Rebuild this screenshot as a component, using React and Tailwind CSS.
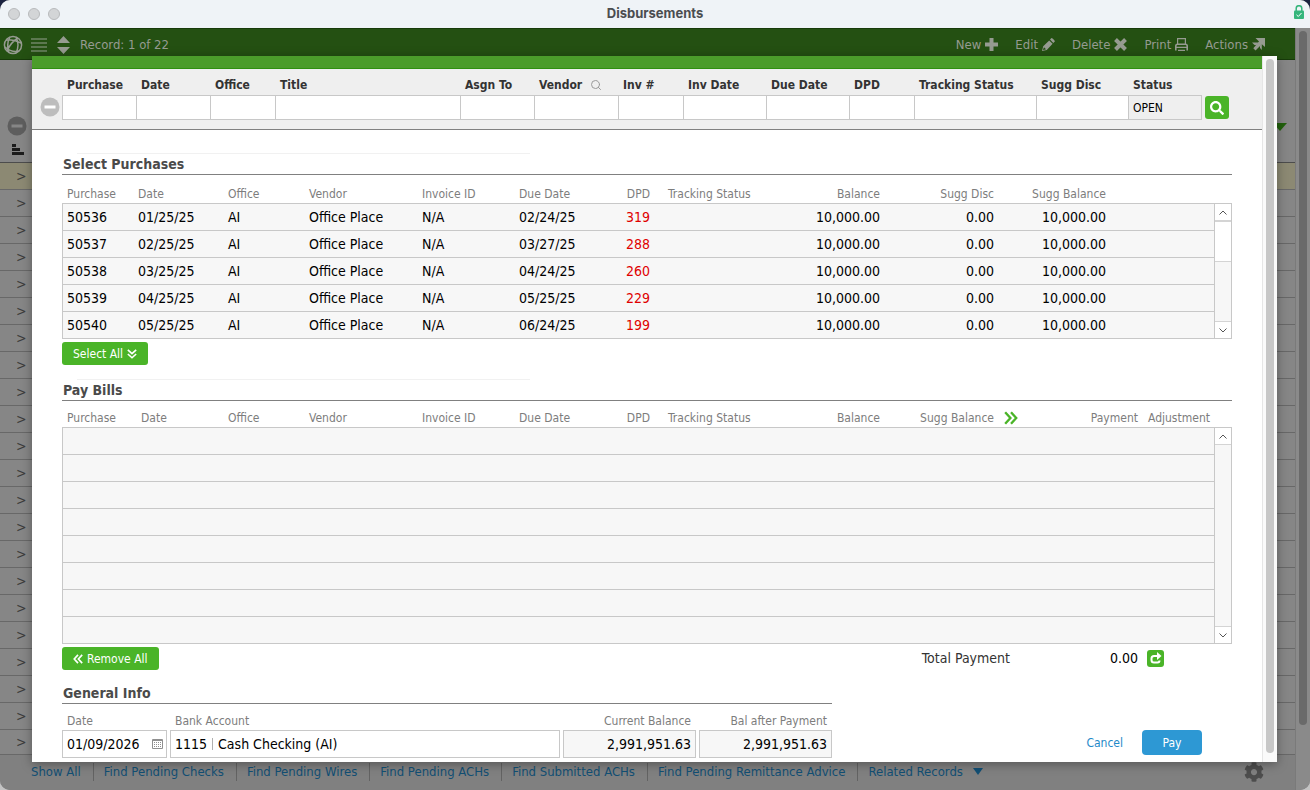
import { useState } from "react";
import { FaSearch, FaCog } from "react-icons/fa";
import { Search } from "lucide-react";

const filters = [
    { name: "Purchase", size: "flex-[74]" },
    { name: "Date", size: "flex-[74]" },
    { name: "Office", size: "flex-[65]" },
    { name: "Title", size: "flex-[185]" },
    { name: "Asgn To", size: "flex-[74]" },
    { name: "Vendor", size: "flex-[84]", lookup: true },
    { name: "Inv #", size: "flex-[65]" },
    { name: "Inv Date", size: "flex-[83]" },
    { name: "Due Date", size: "flex-[83]" },
    { name: "DPD", size: "flex-[65]" },
    { name: "Tracking Status", size: "flex-[122]" },
    { name: "Sugg Disc", size: "flex-[92]" },
    { name: "Status", size: "flex-[74]", value: "OPEN" },
];

const purchases = [
    { id: "50536", date: "01/25/25", due: "02/24/25", dpd: 319 },
    { id: "50537", date: "02/25/25", due: "03/27/25", dpd: 288 },
    { id: "50538", date: "03/25/25", due: "04/24/25", dpd: 260 },
    { id: "50539", date: "04/25/25", due: "05/25/25", dpd: 229 },
    { id: "50540", date: "05/25/25", due: "06/24/25", dpd: 199 },
];

const purchaseColumns = [
    { label: "Purchase", cls: "w-[71px] text-left pl-1" },
    { label: "Date", cls: "w-[90px] text-left pl-[5px]" },
    { label: "Office", cls: "w-[81px] text-left pl-[5px]" },
    { label: "Vendor", cls: "w-[113px] text-left pl-[5px]" },
    { label: "Invoice ID", cls: "w-[97px] text-left pl-[5px]" },
    { label: "Due Date", cls: "w-[95px] text-left pl-[5px]" },
    { label: "DPD", cls: "w-[46px] text-right pr-[5px]" },
    { label: "Tracking Status", cls: "w-[140px] text-left pl-[13px]" },
    { label: "Balance", cls: "w-[90px] text-right pr-[5px]" },
    { label: "Sugg Disc", cls: "w-[114px] text-right pr-[5px]" },
    { label: "Sugg Balance", cls: "w-[112px] text-right pr-[5px]" },
    { label: "", cls: "" },
];

const billColumns = [
    { label: "Purchase", cls: "w-[74px] text-left pl-1" },
    { label: "Date", cls: "w-[87px] text-left pl-[5px]" },
    { label: "Office", cls: "w-[81px] text-left pl-[5px]" },
    { label: "Vendor", cls: "w-[113px] text-left pl-[5px]" },
    { label: "Invoice ID", cls: "w-[97px] text-left pl-[5px]" },
    { label: "Due Date", cls: "w-[95px] text-left pl-[5px]" },
    { label: "DPD", cls: "w-[46px] text-right pr-[5px]" },
    { label: "Tracking Status", cls: "w-[140px] text-left pl-[13px]" },
    { label: "Balance", cls: "w-[90px] text-right pr-[5px]" },
    { label: "Sugg Balance", cls: "w-[114px] text-right pr-[5px]" },
    { label: "move", cls: "w-[24px] text-left pl-[5px]" },
    { label: "Payment", cls: "text-right pr-[5px]" },
    { label: "Adjustment", cls: "w-[72px] text-left pl-[5px]" },
];

const footerLinks = [
    "Show All",
    "Find Pending Checks",
    "Find Pending Wires",
    "Find Pending ACHs",
    "Find Submitted ACHs",
    "Find Pending Remittance Advice",
];

function DoubleChevron({ className }) {
    return (
        <svg viewBox="0 0 12 12" className={className} fill="none" stroke="currentColor" strokeWidth="2">
            <path d="M1 1l4.5 5L1 11M6 1l4.5 5L6 11" />
        </svg>
    );
}

function PlusIcon() {
    return (
        <svg viewBox="0 0 13 13" className="size-[13px]" fill="currentColor">
            <path d="M4.5 0h4v4.5H13v4H8.500V13h-4V8.500H0v-4h4.500z" />
        </svg>
    );
}

function PencilIcon() {
    return (
        <svg viewBox="0 0 13 13" className="size-[13px]" fill="currentColor">
            <path d="M9.500 0Q10.500 0 13 3.300L11.300 5 8 1.600zM7.200 2.400l3.400 3.400L4.800 12 0 13l1.200-4.800z" />
            <path d="M2 9.200l2 2-2.400.9-.6-.6z" fill="#245012" />
        </svg>
    );
}

function CrossIcon() {
    return (
        <svg viewBox="0 0 13 13" className="size-[13px]" stroke="currentColor" strokeWidth="4">
            <path d="M1.500 1.500l10 10M11.500 1.500l-10 10" />
        </svg>
    );
}

function PrintIcon() {
    return (
        <svg viewBox="0 0 13 13" className="size-[13px]" fill="none" stroke="currentColor">
            <path d="M2.600 6V.700h7.800V6" strokeWidth="1.200" />
            <path d="M.800 12.500V8Q.800 6.300 2.500 6.300h8q1.700 0 1.700 1.700v4.500" strokeWidth="1.600" />
            <path d="M1 9.300h11M3 12.300h7" strokeWidth="1.300" />
        </svg>
    );
}

function ActionsIcon() {
    return (
        <svg viewBox="0 0 13 13" className="size-[13px]" fill="currentColor">
            <path d="M3.500 0H13v9L9.800 6.200 3.500 12.500 1.300 10.300 7 3.500z" />
            <path d="M0 4.500h7L4.500 7H2.500zM8 7.500l1.800-1.800V12L8 10z" />
        </svg>
    );
}

function MinusCircle({ className }) {
    return (
        <svg viewBox="0 0 20 20" className={className}>
            <circle cx="10" cy="10" r="9.5" fill="currentColor" />
            <rect x="4.5" y="8.5" width="11" height="3" className="fill-[#fff]" />
        </svg>
    );
}

function GridScrollbar({ thumb }) {
    return (
        <div className="flex w-[17px] shrink-0 flex-col border border-l-0 border-[#c8c8c8] bg-[#f7f7f7]">
            <button aria-label="Scroll up" className="flex h-[17px] items-center justify-center border-b border-[#d4d4d4] bg-white text-[#555]">
                <svg viewBox="0 0 8 5" className="w-2" fill="none" stroke="currentColor"><path d="M.5 4.5L4 1l3.5 3.5" /></svg>
            </button>
            {thumb && <div className="h-[41px] border-y border-[#d4d4d4] bg-white"></div>}
            <button aria-label="Scroll down" className="mt-auto flex h-[17px] items-center justify-center border-t border-[#d4d4d4] bg-white text-[#555]">
                <svg viewBox="0 0 8 5" className="w-2" fill="none" stroke="currentColor"><path d="M.5 .5L4 4 7.5 .5" /></svg>
            </button>
        </div>
    );
}

function Grid({ columns, rows, headHeight, headPad, scrollTop, thumb }) {
    return (
        <div className="flex">
            <table className="w-full table-fixed border-separate border-spacing-0">
                <thead>
                    <tr className={headHeight}>
                        {columns.map((col) => (
                            <th key={col.label} className={`${col.cls} ${headPad} border-b border-[#c8c8c8] align-middle text-[12px] leading-4 font-normal whitespace-nowrap text-[#7d7d7d] first:pl-[5px]`}>
                                {col.label === "move" ? <DoubleChevron className="size-[14px] text-[#4ab428]" /> : col.label}
                            </th>
                        ))}
                    </tr>
                </thead>
                <tbody className="bg-[#f7f7f7]">
                    {rows.map((cells, r) => (
                        <tr key={r} className="h-[27px]">
                            {columns.map((col, c) => (
                                <td
                                    key={col.label}
                                    className={`${col.cls} border-b border-[#c8c8c8] py-0 text-[14px] leading-4 whitespace-nowrap first:border-l last:border-r ${col.label === "DPD" ? "text-[#e00000]" : "text-black"}`}
                                >
                                    {cells[c]}
                                </td>
                            ))}
                        </tr>
                    ))}
                </tbody>
            </table>
            <div className={`flex ${scrollTop}`}>
                <GridScrollbar thumb={thumb} />
            </div>
        </div>
    );
}

function SectionTitle({ children }) {
    return (
        <h2 className="border-b border-[#808080] pb-[1px] pl-px text-[14px] leading-[18px] font-bold text-[#4a4a4a]">{children}</h2>
    );
}

function ToolbarButton({ label, children }) {
    return (
        <button className="flex items-center gap-1">
            {label}
            {children}
        </button>
    );
}

function Backdrop() {
    return (
        <div className="flex flex-1">
            <div className="flex min-w-0 flex-1 flex-col">
                <div className="flex h-8 items-center border-t border-b border-[#173a0a] bg-[#245012] pt-px pr-[30px] pl-[3px] text-[13px] text-[#969b91]">
                    <svg viewBox="0 0 20 20" className="size-5" fill="none" stroke="currentColor" strokeWidth="1.5">
                        <circle cx="10" cy="10" r="8.6" />
                        <path d="M3 5Q10 4 18 8M2 12q7 6 14 4M7 2Q3 9 6 18M13 2q4 8 0 16M4 16Q8 7 15 3" />
                    </svg>
                    <svg viewBox="0 0 16 14" className="ml-2 h-[14px] w-4" stroke="#6f8565" strokeWidth="1.6">
                        <path d="M0 1h16M0 5h16M0 9h16M0 13h16" />
                    </svg>
                    <svg viewBox="0 0 13 18" className="ml-[10px] h-[18px] w-[13px]" fill="currentColor">
                        <path d="M6.500 0L13 7H0zM0 11h13l-6.500 7z" />
                    </svg>
                    <span className="ml-[10px]">Record: 1 of 22</span>
                    <div className="ml-auto flex gap-[17px]">
                        <ToolbarButton label="New"><PlusIcon /></ToolbarButton>
                        <ToolbarButton label="Edit"><PencilIcon /></ToolbarButton>
                        <ToolbarButton label="Delete"><CrossIcon /></ToolbarButton>
                        <ToolbarButton label="Print"><PrintIcon /></ToolbarButton>
                        <ToolbarButton label="Actions"><ActionsIcon /></ToolbarButton>
                    </div>
                </div>
                <div className="flex h-[103px] items-end justify-between border-b border-[#4c4c4c] bg-[#868686] pr-2 pb-[7px] pl-[7px]">
                    <div className="flex flex-col gap-2">
                        <svg viewBox="0 0 20 20" className="size-5">
                            <circle cx="10" cy="10" r="9.5" fill="#5e5e5e" />
                            <rect x="4.500" y="8.500" width="11" height="3" fill="#868686" />
                        </svg>
                        <svg viewBox="0 0 12 11" className="ml-[5px] h-[11px] w-3" fill="#1c1c1c">
                            <path d="M0 0h4v3H0zM0 4h8v3H0zM0 8h12v3H0z" />
                        </svg>
                    </div>
                    <svg viewBox="0 0 14 8" className="mb-6 h-2 w-[14px]" fill="#22610c"><path d="M0 0h14L7 8z" /></svg>
                </div>
                {Array.from({ length: 22 }, (_, i) => (
                    <div
                        key={i}
                        className={`flex items-center border-b border-[#686868] pl-4 text-[14px] leading-4 text-[#3c3c3c] ${i === 21 ? "h-[25px]" : "h-[27px]"} ${i === 0 ? "bg-[#8c8973]" : "bg-[#868686]"}`}
                    >
                        &gt;
                    </div>
                ))}
                <div className="flex flex-1 items-center bg-[#808080] pr-[31px] pb-[2px] pl-[31px] text-[13px] text-[#124f74]">
                    <nav className="flex">
                        {footerLinks.map((link) => (
                            <a key={link} href="#" className="mr-[10px] border-r border-[#636363] pr-3 leading-[18px] whitespace-nowrap">{link}</a>
                        ))}
                        <a href="#" className="flex items-center gap-[10px] leading-[18px] whitespace-nowrap">
                            Related Records
                            <svg viewBox="0 0 10 7" className="h-[7px] w-[10px]" fill="currentColor"><path d="M0 0h10L5 7z" /></svg>
                        </a>
                    </nav>
                    <button aria-label="Settings" className="ml-auto"><FaCog className="size-5 text-[#4d4d4d]" /></button>
                </div>
            </div>
            <div className="w-[15px] border-l border-[#7a7a7a] bg-[#8a8a8a] px-[3px] pt-[3px]">
                <div className="h-[694px] rounded-full bg-[#6a6a6a]"></div>
            </div>
        </div>
    );
}

function FilterBar() {
    return (
        <form className="flex items-end border-b border-[#808080] bg-[#efefef] pt-[5px] pr-[33px] pb-[9px] pl-2" onSubmit={(e) => e.preventDefault()}>
            <button type="button" aria-label="Clear filters" className="mr-[2px] mb-[3px]">
                <MinusCircle className="size-5 text-[#bdbdbd]" />
            </button>
            <div className="flex flex-1">
                {filters.map((f) => (
                    <div key={f.name} className={`${f.size} min-w-0`}>
                        <label htmlFor={f.name} className="flex h-[21px] items-center gap-2 pl-[5px] text-[12px] font-bold whitespace-nowrap text-[#333]">
                            {f.name}
                            {f.lookup && <Search className="size-3 text-[#9a9a9a]" />}
                        </label>
                        <input
                            id={f.name}
                            defaultValue={f.value}
                            className={`block h-[25px] w-full border border-[#c8c8c8] px-1 text-[12px] text-black ${f.value ? "bg-[#efefef]" : "border-r-0 bg-white"}`}
                        />
                    </div>
                ))}
            </div>
            <button aria-label="Find" className="mb-px ml-[3px] flex h-[23px] w-6 items-center justify-center rounded-[3px] bg-[#4ab428] text-white">
                <FaSearch className="size-[14px]" />
            </button>
        </form>
    );
}

function Field({ id, label, width, align, children }) {
    return (
        <div className={`flex flex-col ${width}`}>
            <label htmlFor={id} className={`px-[5px] text-[12px] leading-[18px] text-[#7d7d7d] ${align}`}>{label}</label>
            {children}
        </div>
    );
}

export default function App() {
    const [date, setDate] = useState("01/09/2026");

    const purchaseRows = purchases.map((p) => [
        p.id, p.date, "AI", "Office Place", "N/A", p.due, p.dpd, "", "10,000.00", "0.00", "10,000.00", "",
    ]);
    const billRows = Array.from({ length: 8 }, () => []);

    return (
        <main className="min-h-screen bg-linear-to-b from-[#1b2340] to-[#c4c4c4] font-['DejaVu_Sans_Condensed',sans-serif]">
            <div className="relative flex min-h-screen flex-col overflow-hidden rounded-[10px] bg-[#808080]">
                <header className="flex h-7 items-center justify-between bg-[#eff3f7] px-2">
                    <div className="flex w-20 gap-2">
                        <span className="size-3 rounded-full border border-[#b8babc] bg-[#d3d5d7]"></span>
                        <span className="size-3 rounded-full border border-[#b8babc] bg-[#d3d5d7]"></span>
                        <span className="size-3 rounded-full border border-[#b8babc] bg-[#d3d5d7]"></span>
                    </div>
                    <h1 className="font-['Inter',sans-serif] text-[13px] font-bold text-[#4b4d50]">Disbursements</h1>
                    <div className="flex w-20 justify-end">
                        <svg viewBox="0 0 10 14" className="mr-[-2px] mb-1 h-[14px] w-[10px]" fill="none">
                            <path d="M2.200 6V3.500a2.800 2.800 0 015.600 0V6" stroke="#35b57c" strokeWidth="1.500" />
                            <rect y="5.500" width="10" height="8.500" rx="1" fill="#35b57c" />
                            <path d="M2.500 9.800l1.800 1.700 3.200-3.500" stroke="#fff" />
                        </svg>
                    </div>
                </header>

                <Backdrop />

                <div role="dialog" aria-label="Disbursements" className="absolute inset-x-8 top-14 mr-px flex bg-white shadow-[0_2px_10px_rgba(0,0,0,0.35)]">
                    <div className="min-w-0 flex-1">
                        <div className="h-[13px] border-b border-[#2f8f10] bg-[#4b9c2b]"></div>
                        <FilterBar />

                        <div className="px-[30px] pb-1">
                            <section className="pt-[23px]">
                                <div className="ml-[15px] h-px w-[453px] bg-[#f1f1f1]"></div>
                                <div className="pt-[1px]"><SectionTitle>Select Purchases</SectionTitle></div>
                                <Grid columns={purchaseColumns} rows={purchaseRows} headHeight="h-[29px]" headPad="pt-[10px]" scrollTop="pt-7" thumb />
                                <button className="mt-[3px] flex h-[23px] items-center gap-1 rounded-[3px] bg-[#4ab428] px-[11px] text-[12px] text-white">
                                    Select All
                                    <DoubleChevron className="size-[10px] rotate-90" />
                                </button>
                            </section>

                            <section className="pt-[14px]">
                                <div className="ml-[15px] h-px w-[453px] bg-[#f1f1f1]"></div>
                                <div className="pt-[1px]"><SectionTitle>Pay Bills</SectionTitle></div>
                                <Grid columns={billColumns} rows={billRows} headHeight="h-[27px]" headPad="pt-2" scrollTop="pt-[26px]" />
                                <div className="flex items-center justify-between pt-[3px]">
                                    <button className="flex h-[23px] items-center gap-1 rounded-[3px] bg-[#4ab428] px-[11px] text-[12px] text-white">
                                        <DoubleChevron className="size-[10px] rotate-180" />
                                        Remove All
                                    </button>
                                    <div className="flex items-center pr-[68px] text-[14px]">
                                        <span className="text-[#333]">Total Payment</span>
                                        <span className="w-32 text-right text-black">0.00</span>
                                        <button aria-label="Recalculate total" className="ml-[9px] rounded-[3px] bg-[#4ab428] p-[2px] text-white">
                                            <svg viewBox="0 0 13 13" className="size-[13px]" fill="none" stroke="currentColor" strokeWidth="2">
                                                <path d="M8.500 4H5Q2.500 4 2.500 6.500v1.500Q2.500 10.500 5 10.500h3.500q2 0 2-2" />
                                                <path d="M8 0l4.500 4L8 8z" fill="currentColor" stroke="none" />
                                            </svg>
                                        </button>
                                    </div>
                                </div>
                            </section>

                            <section className="flex items-end justify-between pt-[14px]">
                                <div className="w-[770px]">
                                    <SectionTitle>General Info</SectionTitle>
                                    <div className="flex gap-[3px] pt-2">
                                        <Field id="payDate" label="Date" width="w-[105px]" align="text-left">
                                            <div className="flex h-7 items-center border border-[#c8c8c8] bg-white pr-[3px] pl-1">
                                                <input id="payDate" value={date} onChange={(e) => setDate(e.target.value)} className="w-0 flex-1 text-[14px] text-black outline-none" />
                                                <svg viewBox="0 0 11 10" className="h-[10px] w-[11px]" fill="none" stroke="#8f8f8f">
                                                    <path d="M.5.5h10v9H.5zM0 1.500h11" />
                                                    <path d="M2 3.500h7M2 5.500h7M2 7.500h7" strokeDasharray="1 1" />
                                                </svg>
                                            </div>
                                        </Field>
                                        <Field id="bank" label="Bank Account" width="flex-1" align="text-left">
                                            <button id="bank" className="flex h-7 items-center border border-[#c8c8c8] bg-white px-1 text-[14px] text-black">
                                                1115<span className="mx-[5px] h-3 w-px bg-[#b0b0b0]"></span>Cash Checking (AI)
                                            </button>
                                        </Field>
                                        <Field id="current" label="Current Balance" width="w-[133px]" align="text-right">
                                            <input id="current" readOnly value="2,991,951.63" className="h-7 w-full border border-[#c8c8c8] bg-[#f7f7f7] px-1 text-right text-[14px] text-black" />
                                        </Field>
                                        <Field id="after" label="Bal after Payment" width="w-[133px]" align="text-right">
                                            <input id="after" readOnly value="2,991,951.63" className="h-7 w-full border border-[#c8c8c8] bg-[#f7f7f7] px-1 text-right text-[14px] text-black" />
                                        </Field>
                                    </div>
                                </div>
                                <div className="mb-[3px] flex items-center gap-[19px] pr-[30px] text-[12px]">
                                    <button className="text-[#1f8ac9]">Cancel</button>
                                    <button className="h-[25px] w-[60px] rounded-[4px] bg-[#2d98d4] text-white">Pay</button>
                                </div>
                            </section>
                        </div>
                    </div>
                    <div className="w-[15px] border-l border-[#e6e6e6] bg-[#fafafa] px-[3px] pt-[3px] pb-[9px]">
                        <div className="h-full rounded-full bg-[#c7c7c7]"></div>
                    </div>
                </div>
            </div>
        </main>
    );
}
